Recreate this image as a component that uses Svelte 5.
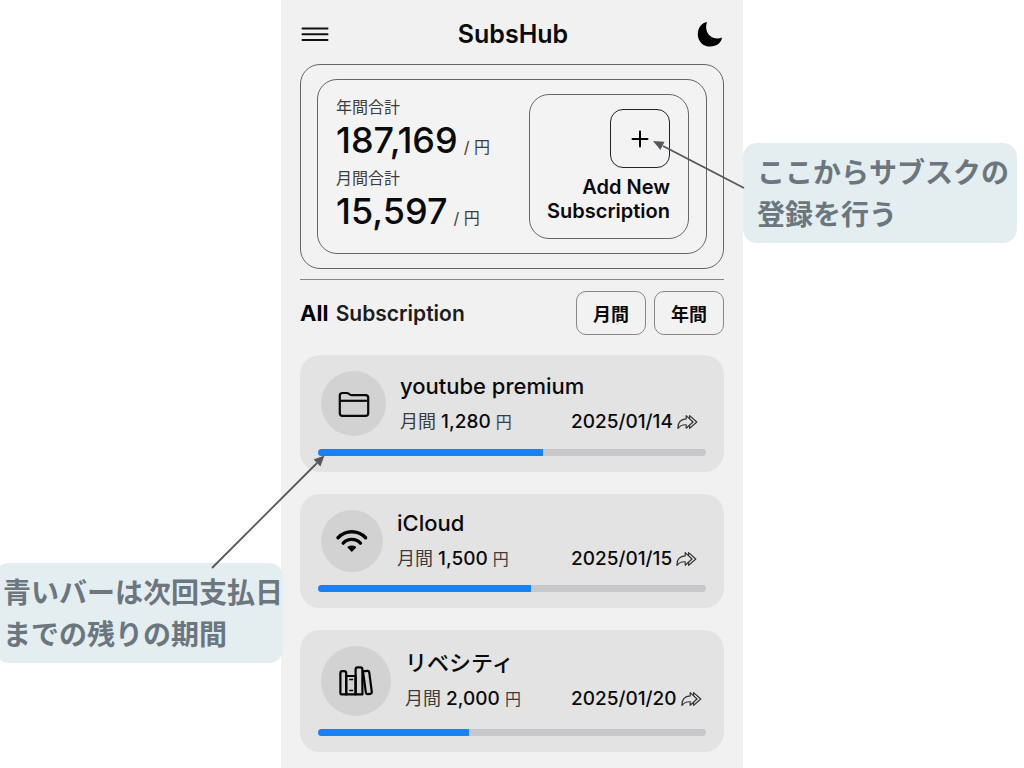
<script>

  // Totals shown in the summary card
  let totals = [
    { label: '年間合計', amount: '187,169' },
    { label: '月間合計', amount: '15,597' }
  ];

  // badge is the icon circle's diameter, remaining is the % of the period left
  let subscriptions = [
    { name: 'youtube premium', icon: 'folder', badge: 65, price: '1,280', date: '2025/01/14', remaining: 58 },
    { name: 'iCloud', icon: 'wifi', badge: 62, price: '1,500', date: '2025/01/15', remaining: 55 },
    { name: 'リベシティ', icon: 'books', badge: 70, price: '2,000', date: '2025/01/20', remaining: 39 }
  ];

  let period = $state('');

</script>

<div class="page">
  <aside class="side left">
    <p class="note">青いバーは次回支払日<br>までの残りの期間</p>
  </aside>

  <main class="phone">
    <header>
      <button class="plain" aria-label="メニュー">
        <svg width="28" height="16" viewBox="0 0 28 16">
          <path d="M1.5 2.5H26.5M1.5 8.3H26.5M1.5 14H26.5" fill="none" stroke="#111" stroke-width="2" stroke-linecap="round" />
        </svg>
      </button>
      <h1>SubsHub</h1>
      <button class="plain" aria-label="ダークモード">
        <svg width="26" height="26" viewBox="0 0 26 26">
          <path d="M10 1C8.3 6.2 9.2 11 12.4 14.2C15.8 17.4 20.5 18.3 25 16.6C24.6 21.6 19.6 25.6 13.4 25.6C6.2 25.6 .8 20.2 .8 13.4C.8 6.8 4.8 1.6 10 1Z" fill="#000" />
        </svg>
      </button>
    </header>

    <section class="summary">
      <div class="summary-inner">
        <dl>
          {#each totals as total}
            <div class="total">
              <dt>{total.label}</dt>
              <dd>{total.amount}<small>/ 円</small></dd>
            </div>
          {/each}
        </dl>
        <div class="add">
          <button id="add" class="add-button" aria-label="追加">
            <svg width="18" height="18" viewBox="0 0 18 18">
              <path d="M9 1.5V16.5M1.5 9H16.5" stroke="#000" stroke-width="2" stroke-linecap="round" />
            </svg>
          </button>
          <label for="add">Add New<br>Subscription</label>
        </div>
      </div>
    </section>

    <hr>

    <div class="list-head">
      <h2><b>All</b> Subscription</h2>
      <div class="periods">
        <button onclick={() => period = 'month'}>月間</button>
        <button onclick={() => period = 'year'}>年間</button>
      </div>
    </div>

    <ul>
      {#each subscriptions as sub}
        <li>
          <div class="row">
            <div class="badge" style:width="{sub.badge}px">
              {#if sub.icon === 'folder'}
                <svg width="34" height="30" viewBox="0 0 34 30" fill="none" stroke="#0a0a0a" stroke-width="2.2" stroke-linejoin="round">
                  <path d="M2.8 24.2V6.6Q2.8 4 5.4 4H9.6Q11 4 12 4.8L12.8 5.5Q13.7 6.2 15 6.2H28.6Q31.2 6.2 31.2 8.8V24.2Q31.2 26.8 28.6 26.8H5.4Q2.8 26.8 2.8 24.2Z" />
                  <path d="M2.8 11.8H31.2" />
                </svg>
              {:else if sub.icon === 'wifi'}
                <svg width="34" height="30" viewBox="0 0 34 30" fill="none" stroke="#000" stroke-width="3.4" stroke-linecap="round">
                  <path d="M3 11.8Q8.8 5.8 16.8 5.8T30.6 11.8" />
                  <path d="M8.2 17.1Q11.8 13.4 16.8 13.4T25.4 17.1" />
                  <path d="M16.8 25.9L12.7 21.7Q12.2 21.1 12.9 20.6Q16.8 18.2 20.7 20.6Q21.4 21.1 20.9 21.7Z" fill="#000" stroke="none" />
                </svg>
              {:else}
                <svg width="34" height="30" viewBox="0 0 34 30" fill="none" stroke="#000" stroke-width="2.2" stroke-linejoin="round">
                  <path d="M1.4 27V7.2Q1.4 5.2 3.4 5.2H5Q7.2 5.2 7.2 7.2V28.4H2.8Q1.4 28.4 1.4 27Z" />
                  <path d="M7.2 10H16.6V28.4H7.2Z" />
                  <path d="M10.2 13.6H14.2M10.2 24.6H14.2" stroke-width="1.5" />
                  <path d="M16.6 28.4V3.4Q16.6 1.4 18.6 1.4H21.2Q23.4 1.4 23.4 3.4V28.4Z" />
                  <path d="M24 5.4L28.2 4.8Q29.9 4.6 30.2 6.2L32.8 25.8Q33 27.6 31.4 27.8L29 28.2Q27.2 28.4 26.9 26.6Z" />
                </svg>
              {/if}
            </div>
            <div class="info">
              <h3>{sub.name}</h3>
              <div class="line">
                <span class="price"><small>月間</small> {sub.price} <small class="yen">円</small></span>
                <span class="date">
                  {sub.date}
                  <svg width="21" height="16" viewBox="0 0 21 16" fill="none" stroke="#333" stroke-width="1.2" stroke-linejoin="round">
                    <path d="M9.2 1.6L16 8L9.2 14.2V10.8Q4 10.4 1 14.4Q.6 5.4 9.2 4.8Z" />
                    <path d="M12.6 4.4V1.6L19.8 8L12.6 14.4V11.4" />
                  </svg>
                </span>
              </div>
            </div>
          </div>
          <div class="bar" role="progressbar" aria-label={sub.name} aria-valuenow={sub.remaining}>
            <div class="fill" style:width="{sub.remaining}%"></div>
          </div>
        </li>
      {/each}
    </ul>

    <!-- Arrows run from the notes onto the phone -->
    <svg class="arrow to-add" width="92" height="50" viewBox="0 0 92 50">
      <path d="M91 48L10 6" stroke="#56565c" stroke-width="1.8" />
      <path d="M0 1L11.5 1.8L7.4 10Z" fill="#56565c" />
    </svg>
    <svg class="arrow to-bar" width="114" height="114" viewBox="0 0 114 114">
      <path d="M1 113L106 8" stroke="#56565c" stroke-width="1.8" />
      <path d="M113.5 .5L109.4 11.4L102.6 4.6Z" fill="#56565c" />
    </svg>
  </main>

  <aside class="side right">
    <p class="note">ここからサブスクの<br>登録を行う</p>
  </aside>
</div>

<style>

  :global(body) {
    margin: 0;
    background: #fff;
  }

  .page {
    display: grid;
    grid-template-columns: minmax(0, 281fr) minmax(0, 462fr) minmax(0, 281fr);
    min-height: 100vh;
    overflow: hidden;
    font-family: Inter, "Noto Sans CJK JP", sans-serif;
    color: #0a0a0a;
  }

  h1, h2, h3, p, ul, dl, dd {
    margin: 0;
    padding: 0;
  }

  button {
    font-family: inherit;
    color: inherit;
    cursor: pointer;
  }

  svg {
    display: block;
  }

  /* Notes beside the phone */
  .side {
    display: flex;
    align-items: flex-start;
    z-index: 1;
  }
  .left {
    padding-top: 563px;
    justify-content: flex-end;
  }
  .right {
    padding-top: 143px;
  }
  .note {
    padding: 9px 8px 7px 14px;
    border-radius: 14px;
    background: #e4edf0;
    color: #6b767e;
    font-size: 28px;
    font-weight: 700;
    line-height: 42px;
    white-space: nowrap;
  }
  .left .note {
    padding: 9px 0 7px 8px;
    margin-right: -2px;
  }

  .phone {
    position: relative;
    box-sizing: border-box;
    padding: 0 19px 16px;
    background: #f1f1f1;
  }

  header {
    display: flex;
    align-items: center;
    justify-content: space-between;
    padding: 20px 1px 16px;
  }
  h1 {
    font-size: 25px;
    font-weight: 600;
    line-height: 28px;
  }
  .plain {
    padding: 0;
    border: none;
    background: none;
  }

  .summary, .summary-inner, .add {
    border: 1px solid #666;
    border-radius: 20px;
  }
  .summary {
    padding: 14px 16px;
    background: #f2f2f2;
  }
  .summary-inner {
    display: flex;
    align-items: flex-start;
    justify-content: space-between;
    padding: 14px 17px 14px 18px;
    background: #f3f3f3;
  }
  dl {
    display: flex;
    flex-direction: column;
    gap: 5px;
  }
  dt {
    font-size: 16px;
    line-height: 26px;
    color: #3c3c3c;
  }
  dd {
    display: flex;
    align-items: baseline;
    gap: 6px;
    height: 40px;
    font-size: 36px;
    font-weight: 500;
    line-height: 40px;
    white-space: nowrap;
  }
  dd small {
    font-size: 16px;
    font-weight: 400;
    line-height: 20px;
    color: #3c3c3c;
  }
  .add {
    display: flex;
    flex-direction: column;
    align-items: flex-end;
    box-sizing: border-box;
    width: 160px;
    padding: 14px 18px 15px 0;
  }
  .add-button {
    display: grid;
    place-items: center;
    width: 60px;
    height: 59px;
    padding: 0;
    border: 1px solid #222;
    border-radius: 13px;
    background: none;
  }
  .add label {
    margin-top: 7px;
    font-size: 20px;
    font-weight: 600;
    line-height: 24px;
    text-align: right;
  }

  hr {
    margin: 10px 0 11px;
    border: none;
    border-top: 1px solid #888;
  }

  .list-head {
    display: flex;
    align-items: center;
    justify-content: space-between;
    margin-bottom: 20px;
  }
  h2 {
    font-size: 21px;
    font-weight: 600;
    color: #1c1c1c;
  }
  h2 b {
    margin-right: 2px;
    font-size: 22px;
    font-weight: 700;
    color: #000;
  }
  .periods {
    display: flex;
    gap: 8px;
  }
  .periods button {
    width: 70px;
    height: 44px;
    padding: 0;
    border: 1px solid #888;
    border-radius: 10px;
    background: #f2f2f2;
    font-size: 18px;
    font-weight: 600;
  }

  ul {
    display: flex;
    flex-direction: column;
    gap: 22px;
    list-style: none;
  }
  li {
    padding: 16px 18px;
    border-radius: 20px;
    background: #e3e3e3;
  }
  .row {
    display: flex;
    align-items: center;
    gap: 14px;
    padding: 0 7px 0 3px;
  }
  .badge {
    display: grid;
    place-items: center;
    flex: none;
    aspect-ratio: 1;
    border-radius: 50%;
    background: #d2d2d2;
  }
  .info {
    flex: 1;
    white-space: nowrap;
  }
  h3 {
    height: 26px;
    margin-bottom: 10px;
    font-size: 22px;
    font-weight: 500;
    line-height: 26px;
  }
  .line {
    display: flex;
    justify-content: space-between;
    height: 26px;
    font-size: 19px;
    font-weight: 500;
    line-height: 26px;
  }
  .line small {
    font-size: 18px;
    font-weight: 400;
    color: #3c3c3c;
  }
  .line .yen {
    font-size: 16px;
  }
  .date {
    display: flex;
    align-items: center;
    gap: 4px;
    width: 128px;
  }
  .date svg {
    flex: none;
  }
  .bar {
    height: 7px;
    margin-top: 13px;
    border-radius: 4px;
    overflow: hidden;
    background: #c8c8ca;
  }
  .fill {
    height: 100%;
    background: #1a82f0;
  }

  .arrow {
    position: absolute;
    z-index: 2;
    pointer-events: none;
  }
  .to-add {
    top: 140px;
    right: -2px;
  }
  .to-bar {
    top: 455px;
    left: -70px;
  }

</style>
